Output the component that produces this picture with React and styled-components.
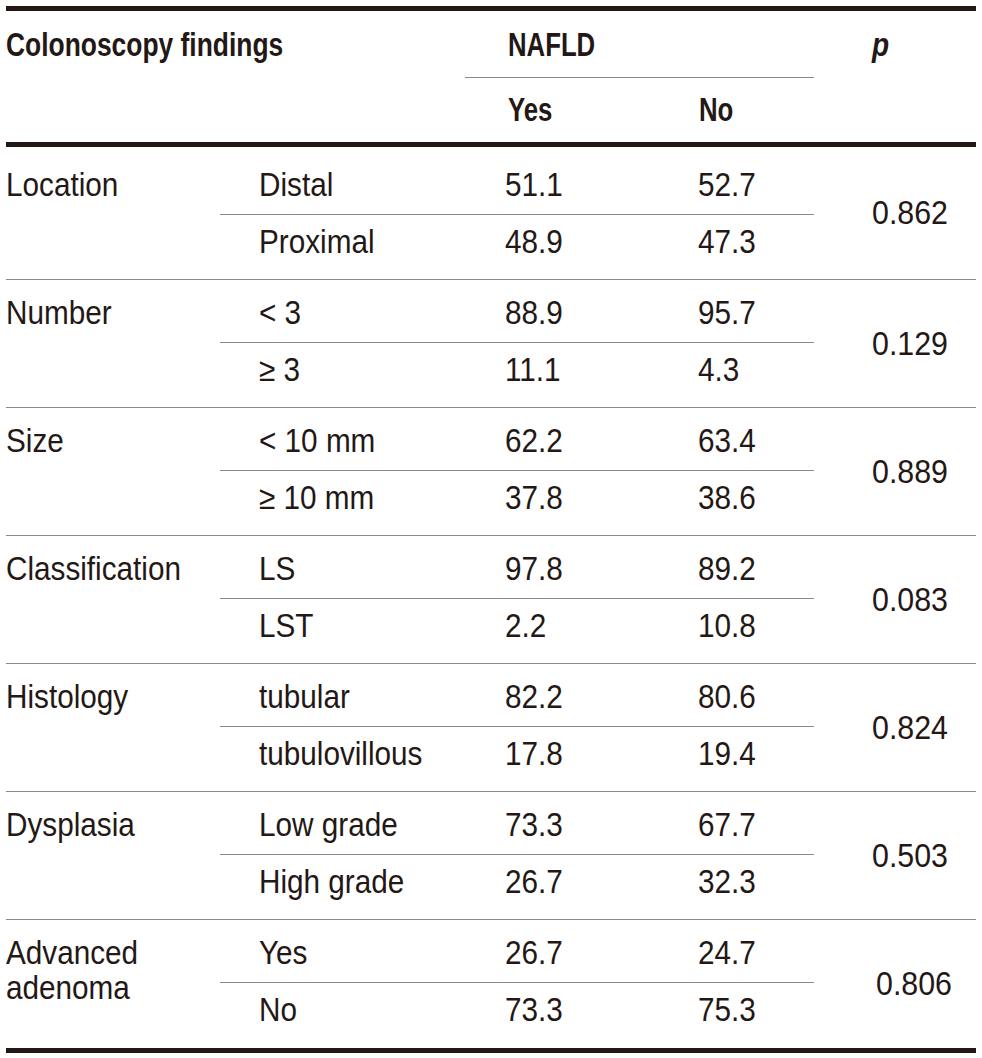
import React from 'react';
import styled, { createGlobalStyle } from 'styled-components';

const GlobalStyle = createGlobalStyle`
  html, body {
    margin: 0;
    padding: 0;
    background: #fff;
  }
  body {
    font-family: 'Liberation Sans', Arial, sans-serif;
    color: #231815;
  }
`;

const INK = '#231815';
const RULE = '#898989';

const Page = styled.div`
  padding: 6px 6px 0 6px;
`;

const Table = styled.table`
  width: 970px;
  table-layout: fixed;
  border-collapse: separate;
  border-spacing: 0;
  border-top: 5px solid ${INK};
  border-bottom: 5px solid ${INK};
  font-size: 33px;
  line-height: 36px;
`;

const Row = styled.tr`
  height: ${(p) => p.$h}px;
`;

const Th = styled.th`
  box-sizing: border-box;
  padding: ${(p) => p.$top}px 0 0 ${(p) => p.$left || 0}px;
  vertical-align: top;
  text-align: left;
  font-weight: 700;
  white-space: nowrap;
  border-bottom: ${(p) =>
    p.$thick ? `5px solid ${INK}` : p.$line ? `1px solid ${RULE}` : 'none'};
`;

const Td = styled.td`
  box-sizing: border-box;
  padding: ${(p) => p.$top}px 0 0 ${(p) => p.$left || 0}px;
  vertical-align: top;
  text-align: left;
  font-weight: 400;
  white-space: nowrap;
  border-bottom: ${(p) => (p.$line ? `1px solid ${RULE}` : 'none')};
`;

const Label = styled(Td)`
  line-height: 35px;
`;

const PCell = styled(Td)`
  && {
    vertical-align: middle;
    padding: 0 0 0 ${(p) => p.$left}px;
  }
`;

const Txt = styled.span`
  display: inline-block;
  transform: scaleX(${(p) => p.$sx || 0.9});
  transform-origin: left center;
`;

const Italic = styled(Txt)`
  font-style: italic;
`;

const groups = [
  { name: ['Location'], rows: [['Distal', '51.1', '52.7'], ['Proximal', '48.9', '47.3']], p: '0.862' },
  { name: ['Number'], rows: [['< 3', '88.9', '95.7'], ['≥ 3', '11.1', '4.3']], p: '0.129' },
  { name: ['Size'], rows: [['< 10 mm', '62.2', '63.4'], ['≥ 10 mm', '37.8', '38.6']], p: '0.889' },
  { name: ['Classification'], rows: [['LS', '97.8', '89.2'], ['LST', '2.2', '10.8']], p: '0.083' },
  { name: ['Histology'], rows: [['tubular', '82.2', '80.6'], ['tubulovillous', '17.8', '19.4']], p: '0.824' },
  { name: ['Dysplasia'], rows: [['Low grade', '73.3', '67.7'], ['High grade', '26.7', '32.3']], p: '0.503' },
  { name: ['Advanced', 'adenoma'], rows: [['Yes', '26.7', '24.7'], ['No', '73.3', '75.3']], p: '0.806', pShift: 4 },
];

const Group = ({ g, first, last }) => {
  const top1 = first ? 20 : 15;
  const [r1, r2] = g.rows;
  return (
    <>
      <Row $h={first ? 68 : 63}>
        <Label rowSpan={2} $top={top1} $line={!last}>
          <Txt>
            {g.name.map((n, i) => (
              <React.Fragment key={n}>
                {i > 0 && <br />}
                {n}
              </React.Fragment>
            ))}
          </Txt>
        </Label>
        <Td $top={top1} $left={39} $line><Txt>{r1[0]}</Txt></Td>
        <Td $top={top1} $left={40} $line><Txt>{r1[1]}</Txt></Td>
        <Td $top={top1} $left={40} $line><Txt>{r1[2]}</Txt></Td>
        <PCell rowSpan={2} $left={58 + (g.pShift || 0)} $line={!last}>
          <Txt $sx={0.92}>{g.p}</Txt>
        </PCell>
      </Row>
      <Row $h={65}>
        <Td $top={9} $left={39} $line={!last}><Txt>{r2[0]}</Txt></Td>
        <Td $top={9} $left={40} $line={!last}><Txt>{r2[1]}</Txt></Td>
        <Td $top={9} $left={40} $line={!last}><Txt>{r2[2]}</Txt></Td>
      </Row>
    </>
  );
};

const App = () => {
  return (
    <Page>
      <GlobalStyle />
      <Table>
        <colgroup>
          <col style={{ width: 214 }} />
          <col style={{ width: 245 }} />
          <col style={{ width: 193 }} />
          <col style={{ width: 156 }} />
          <col style={{ width: 162 }} />
        </colgroup>
        <thead>
          <Row $h={67}>
            <Th colSpan={2} $top={16}><Txt $sx={0.8}>Colonoscopy findings</Txt></Th>
            <Th colSpan={2} $top={16} $left={43} $line><Txt $sx={0.78}>NAFLD</Txt></Th>
            <Th rowSpan={2} $top={16} $left={58} $thick><Italic $sx={0.85}>p</Italic></Th>
          </Row>
          <Row $h={69}>
            <Th colSpan={2} $top={14} $thick />
            <Th $top={14} $left={43} $thick><Txt $sx={0.78}>Yes</Txt></Th>
            <Th $top={14} $left={41} $thick><Txt $sx={0.78}>No</Txt></Th>
          </Row>
        </thead>
        <tbody>
          {groups.map((g, i) => (
            <Group key={g.p} g={g} first={i === 0} last={i === groups.length - 1} />
          ))}
        </tbody>
      </Table>
    </Page>
  );
};

export default App;
